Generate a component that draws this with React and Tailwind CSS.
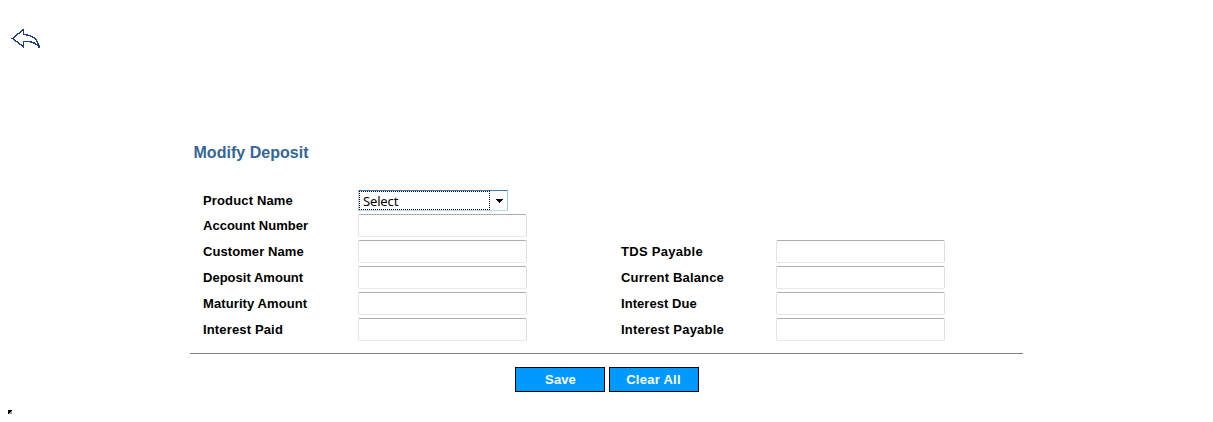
function Field({ label, tracking = "tracking-[0.05px]" }) {
  return (
    <label className="flex h-[26px] items-start">
      <span className={`w-[155px] whitespace-nowrap pt-[2px] text-[13px] leading-[20px] font-bold text-black ${tracking}`}>{label}</span>
      <input
        type="text"
        className="h-[23px] w-[169px] rounded-[2px] border border-t-[#abadb3] border-r-[#dbdfe6] border-b-[#e3e9ef] border-l-[#e2e3ea] bg-white px-1 text-[13px] outline-none"
      />
    </label>
  );
}

function ProductSelect() {
  return (
    <div className="flex h-[24px] items-start">
      <span className="w-[155px] whitespace-nowrap pt-px text-[13px] leading-[20px] font-bold tracking-[0.15px] text-black">Product Name</span>
      <button
        type="button"
        className="flex h-[21px] w-[150px] rounded-[1px] border border-t-[#3d7bad] border-r-[#a4c9e3] border-b-[#b7d9ed] border-l-[#b5cfe7] bg-white text-left"
      >
        <span className="h-[19px] w-[131px] border border-dotted border-black pl-[3px] font-['Noto_Sans','Open_Sans',sans-serif] text-[13px] leading-[19px] tracking-[-0.15px] text-black">
          Select
        </span>
        <svg className="mt-[8px] ml-[6px] h-[4px] w-[7px]" viewBox="0 0 7 4" shapeRendering="crispEdges">
          <path d="M0 0H7V1H6V2H5V3H4V4H3V3H2V2H1V1H0Z" fill="#000" />
        </svg>
      </button>
    </div>
  );
}

function ActionButton({ children, tracking }) {
  return (
    <button type="button" className={`h-[25px] w-[90px] border border-black bg-[#0099ff] text-[13px] leading-[23px] font-bold text-white ${tracking}`}>
      {children}
    </button>
  );
}

export default function App() {
  return (
    <main className="flex h-[422px] w-[1213px] flex-col overflow-hidden bg-white font-['Liberation_Sans',Arial,sans-serif]">
      <header className="h-[143px] pt-[28px] pl-[11px]">
        <svg className="h-[22px] w-[31px]" viewBox="0 0 31 22" fill="none" stroke="#1f3f86" strokeWidth="1.4" shapeRendering="crispEdges">
          <path d="M1.5 10.5L12.5 1.5V6.5C19 6.8 26.5 9.5 28.5 19.8C25.5 15 20 13 12.5 13.5V18.8Z" />
        </svg>
      </header>
      <section className="ml-[190px] h-[211px] w-[833px] border-b border-[#808080]">
        <h1 className="pl-[3.5px] text-[16px] leading-[20px] font-bold tracking-[0.03px] text-[#336699]">Modify Deposit</h1>
        <form className="mt-[27px] grid grid-cols-[418px_1fr] pl-[13px]">
          <div>
            <ProductSelect />
            <Field label="Account Number" tracking="tracking-[0.02px]" />
            <Field label="Customer Name" tracking="tracking-[0.08px]" />
            <Field label="Deposit Amount" tracking="tracking-[0.02px]" />
            <Field label="Maturity Amount" tracking="tracking-[0.1px]" />
            <Field label="Interest Paid" tracking="tracking-[0.15px]" />
          </div>
          <div className="pt-[50px]">
            <Field label="TDS Payable" tracking="tracking-[0.3px]" />
            <Field label="Current Balance" tracking="tracking-[0.17px]" />
            <Field label="Interest Due" />
            <Field label="Interest Payable" tracking="tracking-[0.2px]" />
          </div>
        </form>
      </section>
      <div className="mt-[13px] ml-[515px] flex gap-[4px]">
        <ActionButton tracking="pl-px tracking-[0.1px]">Save</ActionButton>
        <ActionButton tracking="pr-px tracking-[0.25px]">Clear All</ActionButton>
      </div>
      <svg className="mt-[18px] ml-[8px] h-[4px] w-[4px]" viewBox="0 0 4 4" shapeRendering="crispEdges">
        <path d="M0 0H4V4H0Z" fill="#a0a0a0" />
        <path d="M0 0H4V1H3V2H2V3H1V4H0Z" fill="#000" />
      </svg>
    </main>
  );
}
